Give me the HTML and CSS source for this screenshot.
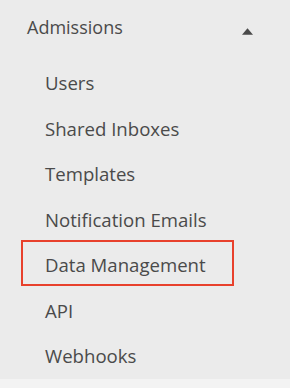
FILE: index.html
```html
<html lang="en">

<head>
  <meta charset="UTF-8">
  <meta name="viewport" content="width=device-width, initial-scale=1.0">
  <title>Admissions</title>
  <link rel="stylesheet" href="styles.css">
</head>

<body>

  <div class="nav">
    <div class="nav-head">
      <span class="nav-title">Admissions</span>
      <svg class="caret" width="11" height="7" viewBox="0 0 11 7">
        <polygon points="5.5,0.3 11,6.8 0,6.8" fill="#4a4a4a" />
      </svg>
    </div>
    <ul class="nav-list">
      <li><a href="#">Users</a></li>
      <li><a href="#">Shared Inboxes</a></li>
      <li><a href="#">Templates</a></li>
      <li><a href="#">Notification Emails</a></li>
      <!-- 高亮的选项 -->
      <li><a href="#" class="active">Data Management</a></li>
      <li><a href="#">API</a></li>
      <li><a href="#">Webhooks</a></li>
    </ul>
  </div>

</body>

</html>
```

FILE: styles.css
```css
* {
  padding: 0;
  margin: 0;
}

body {
  background-color: #f3f3f3;
  font-family: "Open Sans", "Noto Sans", sans-serif;
  font-size: 18px;
  color: #4a4a4a;
}

.nav {
  background-color: #ebebeb;
  padding-top: 15px;
}

.nav-head {
  display: flex;
  justify-content: space-between;
  align-items: flex-start;
  padding: 0 37px 0 27px;
  line-height: 24px;
}

.nav-head .caret {
  display: block;
  margin-top: 13px;
}

.nav-list {
  list-style: none;
  margin-top: 21px;
}

.nav-list a {
  display: block;
  margin: 0 56px 0 21px;
  padding-left: 24px;
  font-size: 18.6px;
  line-height: 45.5px;
  color: #4a4a4a;
  text-decoration: none;
}

.nav-list a.active {
  position: relative;
}

.nav-list a.active::after {
  content: '';
  position: absolute;
  top: -2px;
  left: 0;
  right: 0;
  height: 46px;
  box-sizing: border-box;
  border: 2px solid #e8412c;
}
```
